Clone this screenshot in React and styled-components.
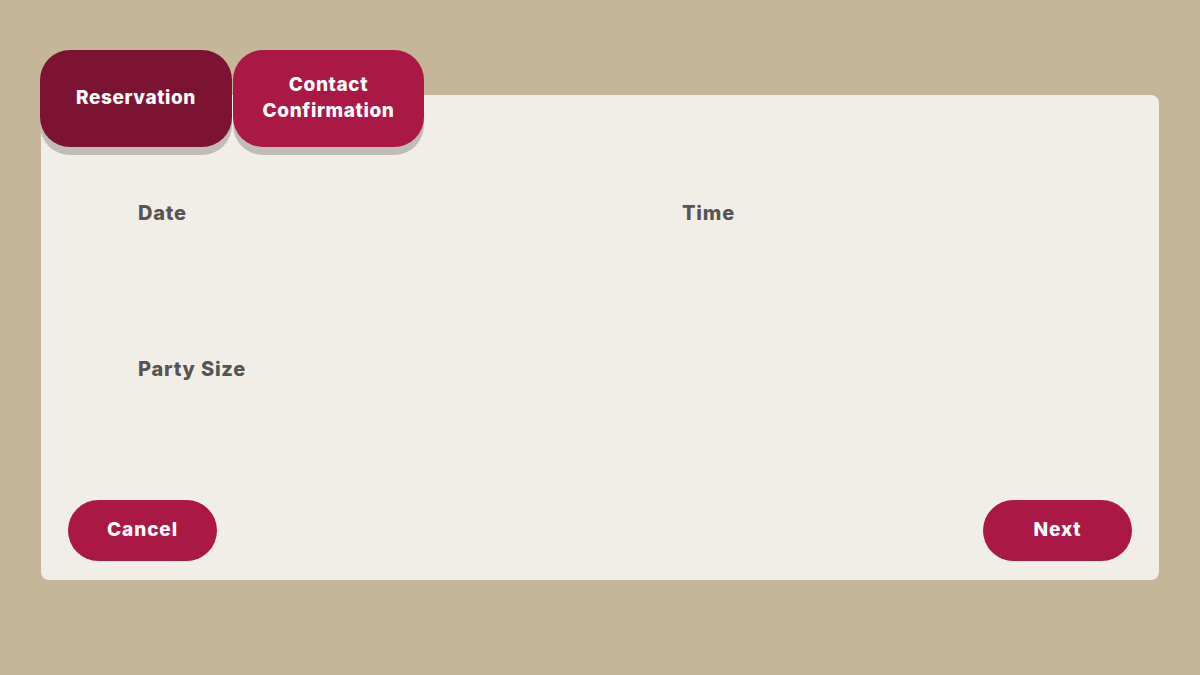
import React from "react";
import styled, { createGlobalStyle } from "styled-components";

const Global = createGlobalStyle`
  html, body { margin: 0; padding: 0; }
  body {
    background: #c6b699;
    font-family: Inter, "Open Sans", "Liberation Sans", sans-serif;
  }
`;

const Page = styled.div`
  width: 1200px;
  height: 675px;
  box-sizing: border-box;
  padding: 50px 0 0 40px;
`;

const TabRow = styled.div`
  display: flex;
  gap: 1px;
  position: relative;
  z-index: 1;
`;

const Tab = styled.button`
  width: ${(p) => p.$w}px;
  height: 97px;
  border: none;
  border-radius: 30px;
  background: ${(p) => (p.$active ? "#7d1332" : "#aa1945")};
  color: #ffffff;
  font-family: inherit;
  font-weight: 800;
  font-size: 19px;
  line-height: 26px;
  letter-spacing: 0.6px;
  box-shadow: 0 8px 0 #c1bcb5;
  padding: 0 0 2px 0;
  cursor: pointer;
`;

const Card = styled.div`
  width: 1118px;
  height: 485px;
  margin: -52px 0 0 1px;
  box-sizing: border-box;
  background: #f1eee8;
  border-radius: 8px;
  display: flex;
  flex-direction: column;
  padding: 106px 27px 19px 27px;
`;

const Fields = styled.div`
  display: grid;
  grid-template-columns: 544px 1fr;
  row-gap: 132px;
  padding-left: 70px;
`;

const Label = styled.div`
  font-weight: 800;
  font-size: 20px;
  line-height: 24px;
  color: #575553;
  letter-spacing: 0.8px;
`;

const Footer = styled.div`
  margin-top: auto;
  display: flex;
  justify-content: space-between;
`;

const Button = styled.button`
  width: 149px;
  height: 61px;
  border: none;
  border-radius: 31px;
  background: #aa1945;
  color: #ffffff;
  font-family: inherit;
  font-weight: 800;
  font-size: 19px;
  letter-spacing: 0.9px;
  padding: 0 0 3px 0;
  cursor: pointer;
`;

export default function App() {
  return (
    <>
      <Global />
      <Page>
        <TabRow>
          <Tab $active $w={192}>Reservation</Tab>
          <Tab $w={191}>
            Contact
            <br />
            Confirmation
          </Tab>
        </TabRow>
        <Card>
          <Fields>
            <Label>Date</Label>
            <Label>Time</Label>
            <Label>Party Size</Label>
          </Fields>
          <Footer>
            <Button>Cancel</Button>
            <Button>Next</Button>
          </Footer>
        </Card>
      </Page>
    </>
  );
}
